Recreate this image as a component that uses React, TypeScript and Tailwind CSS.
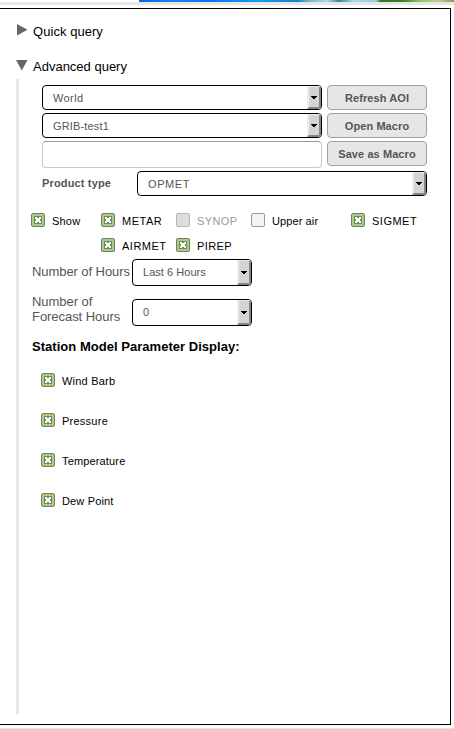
import React from "react";

function Select({ value, className, textClass = "" }: { value: string; className: string; textClass?: string }) {
  return (
    <div className={`flex overflow-hidden rounded-[4px] border border-black bg-white ${className}`}>
      <span className={`flex flex-1 items-center pl-[10px] text-[11px] leading-none text-[#555] ${textClass}`}>{value}</span>
      <span className="flex w-[14px] items-center justify-center border-b-2 border-l-2 border-r-2 border-t border-b-[#858585] border-l-[#eee] border-r-[#858585] border-t-[#eee] bg-[#d4d4d4]">
        <svg width="6" height="3" viewBox="0 0 6 3" shapeRendering="crispEdges" className="mt-px">
          <path d="M0 0H6V1H5V2H4V3H2V2H1V1H0Z" fill="#000" />
        </svg>
      </span>
    </div>
  );
}

function Button({ children }: { children: React.ReactNode }) {
  return (
    <button className="h-[25px] w-[100px] rounded-[4px] border border-[#a0a0a0] bg-[#e6e6e6] pt-px text-[11px] font-bold leading-none tracking-[0.08px] text-[#555]">
      {children}
    </button>
  );
}

function Check({ label, state = "on", className = "", textClass = "" }: { label: string; state?: "on" | "off" | "disabled"; className?: string; textClass?: string }) {
  const border = state === "on" ? "#737a6e" : state === "off" ? "#9a9a9a" : "#b5b5b5";
  const fill = state === "on" ? "#a9cd87" : state === "off" ? "#f3f3f3" : "#dedede";
  return (
    <label className={`flex h-[14px] items-center ${className}`}>
      <svg width="14" height="14" viewBox="0 0 14 14" className="shrink-0">
        <rect x=".5" y=".5" width="13" height="13" rx="1.5" fill={fill} stroke={border} />
        {state === "on" && (
          <g shapeRendering="crispEdges">
            <path d="M3 3H11V11H3Z" fill="#6d8c57" />
            <path d="M4 4H6V5H8V4H10V6H9V8H10V10H8V9H6V10H4V8H5V6H4Z" fill="#fff" />
          </g>
        )}
      </svg>
      <span className={`ml-[7px] whitespace-nowrap pt-[2px] text-[11px] leading-[12px] ${state === "disabled" ? "text-[#999]" : "text-black"} ${textClass}`}>{label}</span>
    </label>
  );
}

export default function App() {
  return (
    <div className="flex h-[729px] w-[454px] flex-col overflow-hidden bg-white font-['Liberation_Sans',Arial,sans-serif] text-black">
      <div className="ml-[139px] h-[2px] shrink-0 bg-[linear-gradient(90deg,#0866d8_0,#1686f0_35px,#0876ea_70px,#159cf5_120px,#1681ce_158px,#78b8ba_170px,#add9ef_188px,#3e8790_200px,#a9d8ed_215px,#9bcce5_237px,#267a28_242px,#427f25_265px,#8ac568_280px,#c8c896_300px,#a08a60_315px)]" />
      <div className="h-[3px] shrink-0 bg-[#e6e6e6]" />
      <main className="mt-[3px] h-[717px] w-[451px] shrink-0 border-b border-r border-t border-black">
        <div className="mt-[15px] flex h-[15px] items-center pl-[17px] text-[13px] leading-[15px]">
          <svg width="11" height="12" viewBox="0 0 11 12" className="mb-[4px]"><path d="M0 0L10.5 5.75L0 11.5Z" fill="#666" /></svg>
          <span className="ml-[5px] tracking-[0.05px]">Quick query</span>
        </div>
        <div className="mt-[20px] flex h-[15px] items-center pl-[16px] text-[13px] leading-[15px]">
          <svg width="12" height="11" viewBox="0 0 12 11" className="mb-[2px]"><path d="M0 0H11.5L5.75 10.5Z" fill="#666" /></svg>
          <span className="ml-[5px]">Advanced query</span>
        </div>
        <section className="ml-[16px] mt-[5px] h-[635px] border-l-[3px] border-[#e6e6e6] pt-[6px]">
          <div className="ml-[23px] flex gap-[5px]">
            <div className="flex w-[280px] flex-col gap-[3px]">
              <Select value="World" className="h-[25px]" textClass="pt-[2px] tracking-[0.4px]" />
              <Select value="GRIB-test1" className="h-[25px]" textClass="pt-[2px] tracking-[0.15px]" />
              <input className="h-[27px] rounded-[4px] border border-[#c8c8c8] border-t-[#999]" />
            </div>
            <div className="flex flex-col gap-[3px]">
              <Button>Refresh AOI</Button>
              <Button>Open Macro</Button>
              <Button>Save as Macro</Button>
            </div>
          </div>
          <div className="ml-[23px] mt-[3px] flex h-[25px] items-center">
            <span className="w-[95px] text-[11px] font-bold leading-none tracking-[0.15px] text-[#555]">Product type</span>
            <Select value="OPMET" className="h-[25px] w-[290px]" textClass="pt-[2px] tracking-[0.6px]" />
          </div>
          <div className="ml-[12px] mt-[17px] grid grid-cols-[70px_75px_75px_100px_80px] gap-y-[11px]">
            <Check label="Show" textClass="tracking-[0.2px]" />
            <Check label="METAR" textClass="tracking-[0.5px]" />
            <Check label="SYNOP" state="disabled" textClass="tracking-[0.4px]" />
            <Check label="Upper air" state="off" textClass="tracking-[0.1px]" />
            <Check label="SIGMET" textClass="tracking-[0.5px]" />
            <Check label="AIRMET" className="col-start-2" textClass="tracking-[0.5px]" />
            <Check label="PIREP" textClass="tracking-[0.4px]" />
          </div>
          <div className="ml-[13px] mt-[7px] flex h-[27px] items-center text-[13px] leading-[15px] text-[#555]">
            <span className="w-[100px] whitespace-nowrap pb-[2px] tracking-[-0.07px]">Number of Hours</span>
            <Select value="Last 6 Hours" className="h-[27px] w-[120px]" textClass="tracking-[0.04px]" />
          </div>
          <div className="ml-[13px] mt-[8px] flex h-[32px] text-[13px] leading-[15px] text-[#555]">
            <span className="w-[100px] tracking-[-0.05px]">Number of<br />Forecast Hours</span>
            <Select value="0" className="mt-[5px] h-[27px] w-[120px]" />
          </div>
          <h2 className="ml-[13px] mt-[13px] text-[13px] font-bold leading-[15px] tracking-[0.03px]">Station Model Parameter Display:</h2>
          <div className="ml-[22px] mt-[19px] flex flex-col gap-[26px]">
            <Check label="Wind Barb" textClass="tracking-[0.22px]" />
            <Check label="Pressure" textClass="tracking-[0.25px]" />
            <Check label="Temperature" textClass="tracking-[0.15px]" />
            <Check label="Dew Point" textClass="tracking-[0.15px]" />
          </div>
        </section>
      </main>
      <div className="mt-[3px] h-px shrink-0 bg-[#e6e6e6]" />
    </div>
  );
}
